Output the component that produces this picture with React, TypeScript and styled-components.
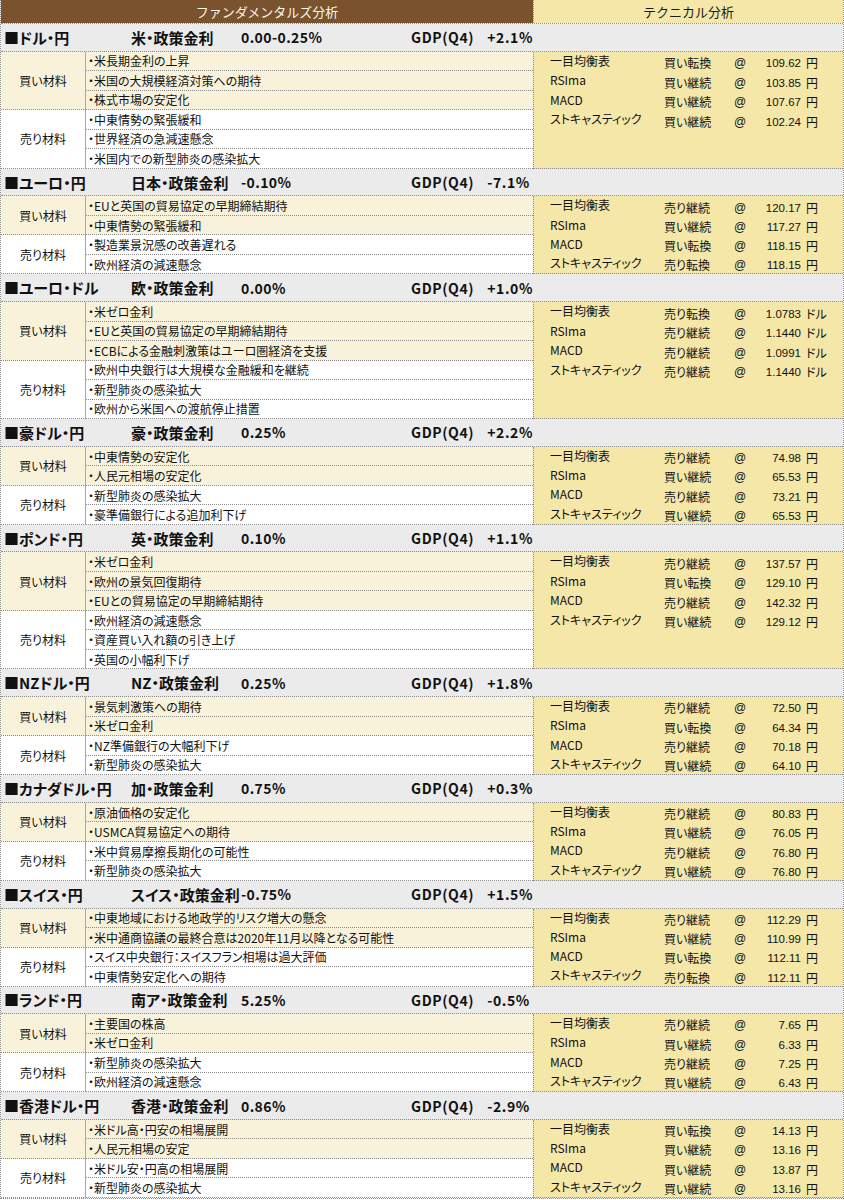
import React from "react";
import styled, { createGlobalStyle } from "styled-components";

const Global = createGlobalStyle`
  html, body { margin: 0; padding: 0; background: #ffffff; }
  body {
    font-family: "Noto Sans CJK JP", "Noto Sans", sans-serif;
    font-feature-settings: "palt";
    color: #111;
  }
`;

type Tech = { name: string; signal: string; price: string; unit: string };
type Section = {
  pair: string;
  rateLabel: string;
  rate: string;
  gdp: string;
  buy: string[];
  sell: string[];
  tech: Tech[];
};

const names = ["一目均衡表", "RSIma", "MACD", "ストキャスティック"];
const mk = (signals: string[], prices: string[], unit = "円"): Tech[] =>
  names.map((n, i) => ({ name: n, signal: signals[i], price: prices[i], unit }));

const data: Section[] = [
  {
    pair: "■ドル・円",
    rateLabel: "米・政策金利",
    rate: "0.00-0.25%",
    gdp: "+2.1%",
    buy: ["・米長期金利の上昇", "・米国の大規模経済対策への期待", "・株式市場の安定化"],
    sell: ["・中東情勢の緊張緩和", "・世界経済の急減速懸念", "・米国内での新型肺炎の感染拡大"],
    tech: mk(["買い転換", "買い継続", "買い継続", "買い継続"], ["109.62", "103.85", "107.67", "102.24"]),
  },
  {
    pair: "■ユーロ・円",
    rateLabel: "日本・政策金利",
    rate: "-0.10%",
    gdp: "-7.1%",
    buy: ["・EUと英国の貿易協定の早期締結期待", "・中東情勢の緊張緩和"],
    sell: ["・製造業景況感の改善遅れる", "・欧州経済の減速懸念"],
    tech: mk(["売り継続", "買い継続", "買い転換", "売り転換"], ["120.17", "117.27", "118.15", "118.15"]),
  },
  {
    pair: "■ユーロ・ドル",
    rateLabel: "欧・政策金利",
    rate: "0.00%",
    gdp: "+1.0%",
    buy: ["・米ゼロ金利", "・EUと英国の貿易協定の早期締結期待", "・ECBによる金融刺激策はユーロ圏経済を支援"],
    sell: ["・欧州中央銀行は大規模な金融緩和を継続", "・新型肺炎の感染拡大", "・欧州から米国への渡航停止措置"],
    tech: mk(["売り転換", "売り継続", "売り継続", "売り継続"], ["1.0783", "1.1440", "1.0991", "1.1440"], "ドル"),
  },
  {
    pair: "■豪ドル・円",
    rateLabel: "豪・政策金利",
    rate: "0.25%",
    gdp: "+2.2%",
    buy: ["・中東情勢の安定化", "・人民元相場の安定化"],
    sell: ["・新型肺炎の感染拡大", "・豪準備銀行による追加利下げ"],
    tech: mk(["売り継続", "買い継続", "売り継続", "買い継続"], ["74.98", "65.53", "73.21", "65.53"]),
  },
  {
    pair: "■ポンド・円",
    rateLabel: "英・政策金利",
    rate: "0.10%",
    gdp: "+1.1%",
    buy: ["・米ゼロ金利", "・欧州の景気回復期待", "・EUとの貿易協定の早期締結期待"],
    sell: ["・欧州経済の減速懸念", "・資産買い入れ額の引き上げ", "・英国の小幅利下げ"],
    tech: mk(["売り継続", "買い転換", "売り継続", "買い継続"], ["137.57", "129.10", "142.32", "129.12"]),
  },
  {
    pair: "■NZドル・円",
    rateLabel: "NZ・政策金利",
    rate: "0.25%",
    gdp: "+1.8%",
    buy: ["・景気刺激策への期待", "・米ゼロ金利"],
    sell: ["・NZ準備銀行の大幅利下げ", "・新型肺炎の感染拡大"],
    tech: mk(["売り継続", "買い転換", "売り継続", "買い継続"], ["72.50", "64.34", "70.18", "64.10"]),
  },
  {
    pair: "■カナダドル・円",
    rateLabel: "加・政策金利",
    rate: "0.75%",
    gdp: "+0.3%",
    buy: ["・原油価格の安定化", "・USMCA貿易協定への期待"],
    sell: ["・米中貿易摩擦長期化の可能性", "・新型肺炎の感染拡大"],
    tech: mk(["売り継続", "買い継続", "売り継続", "買い継続"], ["80.83", "76.05", "76.80", "76.80"]),
  },
  {
    pair: "■スイス・円",
    rateLabel: "スイス・政策金利",
    rate: "-0.75%",
    gdp: "+1.5%",
    buy: ["・中東地域における地政学的リスク増大の懸念", "・米中通商協議の最終合意は2020年11月以降となる可能性"],
    sell: ["・スイス中央銀行：スイスフラン相場は過大評価", "・中東情勢安定化への期待"],
    tech: mk(["売り継続", "買い継続", "買い転換", "売り転換"], ["112.29", "110.99", "112.11", "112.11"]),
  },
  {
    pair: "■ランド・円",
    rateLabel: "南ア・政策金利",
    rate: "5.25%",
    gdp: "-0.5%",
    buy: ["・主要国の株高", "・米ゼロ金利"],
    sell: ["・新型肺炎の感染拡大", "・欧州経済の減速懸念"],
    tech: mk(["売り継続", "買い継続", "売り継続", "買い継続"], ["7.65", "6.33", "7.25", "6.43"]),
  },
  {
    pair: "■香港ドル・円",
    rateLabel: "香港・政策金利",
    rate: "0.86%",
    gdp: "-2.9%",
    buy: ["・米ドル高・円安の相場展開", "・人民元相場の安定"],
    sell: ["・米ドル安・円高の相場展開", "・新型肺炎の感染拡大"],
    tech: mk(["買い転換", "買い継続", "買い継続", "買い継続"], ["14.13", "13.16", "13.87", "13.16"]),
  },
];

const LINE = "1px dotted #8c8c8c";
const ROW_H = 19.5;
const HEAD_H = 27.7;
const CREAM = "#f8f2da";
const YELLOW = "#f5e7a8";

const Sheet = styled.div`
  width: 844px;
  box-sizing: border-box;
  border-left: ${LINE};
  border-right: ${LINE};
  border-bottom: ${LINE};
`;

const TitleRow = styled.div`
  display: grid;
  grid-template-columns: 532px 1fr;
  height: 24px;
  border-bottom: ${LINE};
  box-sizing: border-box;
`;

const TitleCell = styled.div<{ $dark?: boolean }>`
  display: flex;
  align-items: center;
  justify-content: center;
  font-size: 13px;
  font-feature-settings: normal;
  padding-bottom: 1px;
  background: ${(p) => (p.$dark ? "#7a522e" : YELLOW)};
  color: ${(p) => (p.$dark ? "#fbf6ea" : "#1a1a1a")};
  border-left: ${(p) => (p.$dark ? "none" : LINE)};
`;

const SectionHeader = styled.div`
  display: grid;
  grid-template-columns: 130px 280px 1fr;
  align-items: center;
  height: ${HEAD_H}px;
  box-sizing: border-box;
  background: #ebebeb;
  border-bottom: ${LINE};
  font-size: 15px;
  font-weight: 700;
  color: #111;
  white-space: nowrap;
`;

const PairName = styled.div`
  padding-left: 3px;
`;

const RateBox = styled.div`
  display: flex;
  align-items: center;
`;

const RateLabel = styled.span`
  min-width: 110px;
`;

const RateValue = styled.span`
  font-size: 14px;
  letter-spacing: 0.4px;
`;

const GdpBox = styled.div`
  display: flex;
  align-items: center;
  font-size: 14px;
  letter-spacing: 0.6px;
`;

const GdpLabel = styled.span`
  margin-right: 13px;
`;

const Body = styled.div<{ $rows: number }>`
  display: grid;
  grid-template-columns: 85px 447px 1fr;
  grid-template-rows: repeat(${(p) => p.$rows}, ${ROW_H}px);
`;

const GroupLabel = styled.div<{ $start: number; $span: number; $buy: boolean }>`
  grid-column: 1;
  grid-row: ${(p) => p.$start} / span ${(p) => p.$span};
  display: flex;
  align-items: center;
  justify-content: center;
  font-size: 12px;
  background: ${(p) => (p.$buy ? CREAM : "#ffffff")};
  border-right: 1px solid #a9a9a9;
  border-bottom: ${LINE};
  box-sizing: border-box;
`;

const Item = styled.div<{ $row: number; $buy: boolean }>`
  grid-column: 2;
  grid-row: ${(p) => p.$row};
  display: flex;
  align-items: center;
  padding-left: 2px;
  font-size: 12px;
  white-space: nowrap;
  background: ${(p) => (p.$buy ? CREAM : "#ffffff")};
  border-bottom: ${LINE};
  box-sizing: border-box;
`;

const TechCell = styled.div<{ $rows: number }>`
  grid-column: 3;
  grid-row: 1 / span ${(p) => p.$rows};
  background: ${YELLOW};
  border-left: ${LINE};
  border-bottom: ${LINE};
  box-sizing: border-box;
  padding-left: 16px;
  display: flex;
  flex-direction: column;
`;

const TechLine = styled.div`
  display: grid;
  grid-template-columns: 114px 70px 24px 43px auto;
  height: ${ROW_H}px;
  font-size: 12px;
  white-space: nowrap;
`;

const TechName = styled.span`
  align-self: start;
  line-height: 16px;
  padding-top: 1px;
`;

const TechSignal = styled.span`
  align-self: end;
  line-height: 16px;
`;

const TechAt = styled.span`
  align-self: end;
  line-height: 16px;
  font-family: "Liberation Sans", Arial, sans-serif;
`;

const TechPrice = styled.span`
  align-self: end;
  line-height: 16px;
  text-align: right;
  font-family: "Liberation Sans", Arial, sans-serif;
  font-size: 11.5px;
`;

const TechUnit = styled.span`
  align-self: end;
  line-height: 16px;
  padding-left: 5px;
`;

function SectionBlock({ s }: { s: Section }) {
  const nb = s.buy.length;
  const ns = s.sell.length;
  const rows = nb + ns;
  return (
    <>
      <SectionHeader>
        <PairName>{s.pair}</PairName>
        <RateBox>
          <RateLabel>{s.rateLabel}</RateLabel>
          <RateValue>{s.rate}</RateValue>
        </RateBox>
        <GdpBox>
          <GdpLabel>GDP(Q4)</GdpLabel>
          <span>{s.gdp}</span>
        </GdpBox>
      </SectionHeader>
      <Body $rows={rows}>
        <GroupLabel $start={1} $span={nb} $buy>
          買い材料
        </GroupLabel>
        {s.buy.map((t, i) => (
          <Item key={"b" + i} $row={i + 1} $buy>
            {t}
          </Item>
        ))}
        <GroupLabel $start={nb + 1} $span={ns} $buy={false}>
          売り材料
        </GroupLabel>
        {s.sell.map((t, i) => (
          <Item key={"s" + i} $row={nb + i + 1} $buy={false}>
            {t}
          </Item>
        ))}
        <TechCell $rows={rows}>
          {s.tech.map((t) => (
            <TechLine key={t.name}>
              <TechName>{t.name}</TechName>
              <TechSignal>{t.signal}</TechSignal>
              <TechAt>@</TechAt>
              <TechPrice>{t.price}</TechPrice>
              <TechUnit>{t.unit}</TechUnit>
            </TechLine>
          ))}
        </TechCell>
      </Body>
    </>
  );
}

export default function App() {
  return (
    <>
      <Global />
      <Sheet>
        <TitleRow>
          <TitleCell $dark>ファンダメンタルズ分析</TitleCell>
          <TitleCell>テクニカル分析</TitleCell>
        </TitleRow>
        {data.map((s) => (
          <SectionBlock key={s.pair} s={s} />
        ))}
      </Sheet>
    </>
  );
}
